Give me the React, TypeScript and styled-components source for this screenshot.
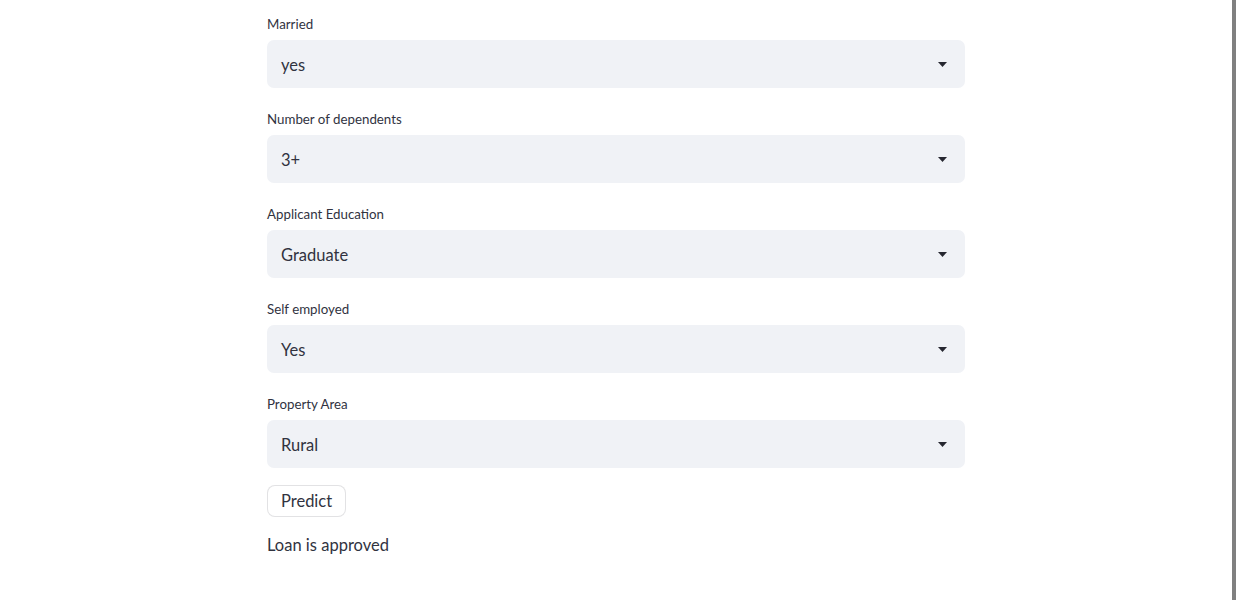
import React from "react";
import styled, { createGlobalStyle } from "styled-components";

const GlobalStyle = createGlobalStyle`
  html, body { margin: 0; padding: 0; background: #ffffff; }
  body { font-family: "Source Sans Pro", Lato, "Noto Sans", sans-serif; color: #31333f; }
`;

const Page = styled.div`
  display: flex;
  width: 1236px;
  height: 600px;
  overflow: hidden;
`;

const Main = styled.main`
  flex: 1;
  display: flex;
  justify-content: center;
  padding-top: 12px;
`;

const ScrollThumb = styled.div`
  width: 4px;
  background: #808080;
`;

const Column = styled.div`
  width: 698px;
  display: flex;
  flex-direction: column;
`;

const Field = styled.div`
  display: flex;
  flex-direction: column;
  margin-bottom: 19px;
`;

const Label = styled.label`
  font-size: 13.3px;
  line-height: 24px;
  height: 24px;
  margin-bottom: 4px;
  color: #31333f;
`;

const SelectBox = styled.div`
  height: 48px;
  box-sizing: border-box;
  background: #f0f2f6;
  border-radius: 7px;
  display: flex;
  align-items: center;
  justify-content: space-between;
  padding: 1px 18px 0 14px;
  font-size: 16.5px;
  color: #31333f;
`;

const Arrow = styled.svg`
  width: 9px;
  height: 5px;
  flex: none;
`;

const Button = styled.button`
  align-self: flex-start;
  height: 32px;
  box-sizing: border-box;
  padding: 0 13px;
  margin-top: -2px;
  background: #ffffff;
  border: 1px solid rgba(49, 51, 63, 0.14);
  border-radius: 8px;
  font-family: inherit;
  font-size: 16.5px;
  color: #31333f;
  line-height: 30px;
`;

const Result = styled.p`
  margin: 16px 0 0 0;
  font-size: 16.5px;
  line-height: 24px;
  color: #31333f;
`;

const fields = [
  { label: "Married", value: "yes" },
  { label: "Number of dependents", value: "3+" },
  { label: "Applicant Education", value: "Graduate" },
  { label: "Self employed", value: "Yes" },
  { label: "Property Area", value: "Rural" },
];

export default function App() {
  return (
    <>
      <GlobalStyle />
      <Page>
        <Main>
          <Column>
            {fields.map((f) => (
              <Field key={f.label}>
                <Label>{f.label}</Label>
                <SelectBox>
                  <span>{f.value}</span>
                  <Arrow viewBox="0 0 9 5">
                    <path d="M0 0 H9 L4.5 5 Z" fill="#262730" />
                  </Arrow>
                </SelectBox>
              </Field>
            ))}
            <Button>Predict</Button>
            <Result>Loan is approved</Result>
          </Column>
        </Main>
        <ScrollThumb />
      </Page>
    </>
  );
}
